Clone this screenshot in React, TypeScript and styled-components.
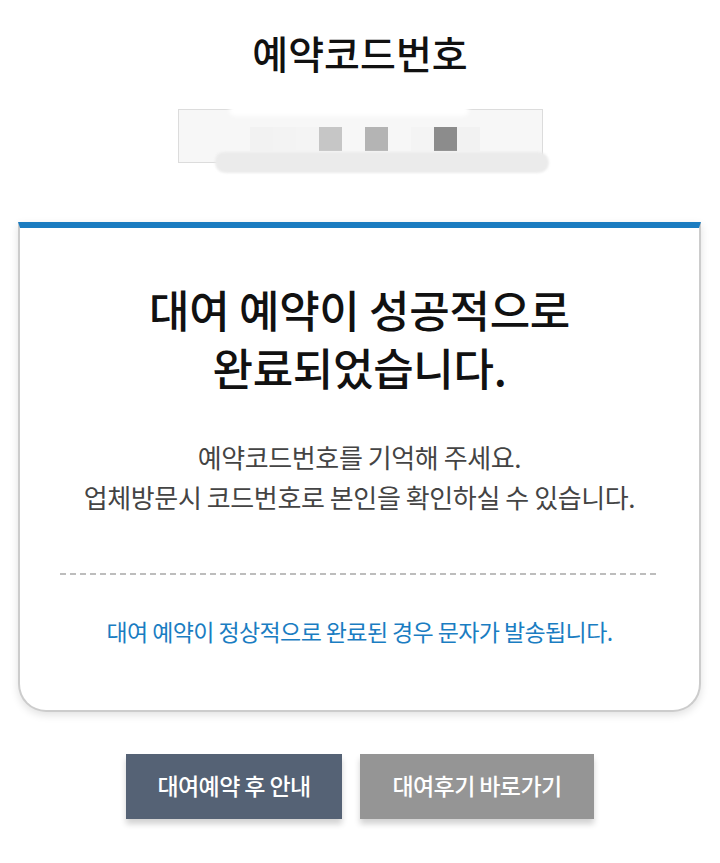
import React from "react";
import styled, { createGlobalStyle } from "styled-components";

const GlobalStyle = createGlobalStyle`
  html, body {
    margin: 0;
    padding: 0;
    background: #ffffff;
  }
  body {
    font-family: "Noto Sans CJK KR", "Noto Sans", sans-serif;
    color: #111;
  }
`;

const Page = styled.main`
  display: flex;
  flex-direction: column;
  align-items: center;
  padding-top: 24px;
  padding-bottom: 40px;
`;

const Title = styled.h1`
  margin: 0;
  font-size: 39px;
  line-height: 56px;
  font-weight: 500;
  color: #111;
  letter-spacing: 0;
`;

const CodeBox = styled.div`
  position: relative;
  margin-top: 29px;
  width: 365px;
  height: 54px;
  box-sizing: border-box;
  border: 1px solid #dcdcdc;
  background: #f7f7f7;
`;

const MosaicRow = styled.div`
  display: flex;
  padding: 17px 0 0 2px;
`;

const MosaicCell = styled.span<{ $c: string }>`
  display: block;
  width: 23px;
  height: 24px;
  background: ${(p) => p.$c};
`;

const BlurBand = styled.div`
  position: absolute;
  left: 36px;
  right: -7px;
  top: 42px;
  height: 21px;
  background: #ebebeb;
  border-radius: 10px 12px 12px 12px;
  filter: blur(1.2px);
`;

const BlurTop = styled.div`
  position: absolute;
  left: 50px;
  width: 240px;
  top: -6px;
  height: 12px;
  background: #ffffff;
  border-radius: 8px;
  filter: blur(2px);
`;

const Card = styled.section`
  align-self: stretch;
  margin: 59px 19px 0 18px;
  box-sizing: border-box;
  background: #ffffff;
  border: 2px solid #cccccc;
  border-top: 6px solid #1b7cc0;
  border-radius: 0 0 28px 28px;
  box-shadow: 0 3px 8px rgba(0, 0, 0, 0.12);
  padding: 52px 30px 64px;
  display: flex;
  flex-direction: column;
  align-items: center;
  text-align: center;
`;

const Heading = styled.h2`
  margin: 0;
  font-size: 44px;
  line-height: 58px;
  font-weight: 500;
  color: #111;
  letter-spacing: -0.3px;
`;

const SubText = styled.p`
  margin: 41px 0 0;
  font-size: 26px;
  line-height: 40px;
  font-weight: 400;
  color: #444;
  letter-spacing: -0.4px;
`;

const Divider = styled.hr`
  align-self: stretch;
  margin: 56px 10px 0;
  height: 2px;
  border: none;
  background: repeating-linear-gradient(
    to right,
    #bdbdbd 0,
    #bdbdbd 6px,
    transparent 6px,
    transparent 10px
  );
`;

const Notice = styled.p`
  margin: 41px 0 0;
  font-size: 23px;
  line-height: 30px;
  font-weight: 400;
  color: #1a7dc2;
  letter-spacing: -0.6px;
`;

const ButtonRow = styled.div`
  display: flex;
  gap: 18px;
  margin-top: 42px;
`;

const ActionButton = styled.button<{ $bg: string; $w: number }>`
  width: ${(p) => p.$w}px;
  height: 65px;
  border: none;
  border-radius: 0;
  background: ${(p) => p.$bg};
  color: #ffffff;
  font-family: "Noto Sans CJK KR", "Noto Sans", sans-serif;
  font-size: 23px;
  line-height: 30px;
  font-weight: 500;
  letter-spacing: -0.6px;
  box-shadow: 0 5px 6px rgba(0, 0, 0, 0.18);
  cursor: pointer;
  padding: 0 0 4px;
`;

const cells = [
  "#f7f7f7",
  "#f7f7f7",
  "#f7f7f7",
  "#f2f2f2",
  "#f3f3f3",
  "#f4f4f4",
  "#c6c6c6",
  "#f7f7f7",
  "#b4b4b4",
  "#f7f7f7",
  "#f4f4f4",
  "#8c8c8c",
  "#f2f2f2",
  "#f7f7f7",
  "#f7f7f7",
];

export default function App() {
  return (
    <>
      <GlobalStyle />
      <Page>
        <Title>예약코드번호</Title>
        <CodeBox>
          <MosaicRow>
            {cells.map((c, i) => (
              <MosaicCell key={i} $c={c} />
            ))}
          </MosaicRow>
          <BlurBand />
          <BlurTop />
        </CodeBox>
        <Card>
          <Heading>
            대여 예약이 성공적으로
            <br />
            완료되었습니다.
          </Heading>
          <SubText>
            예약코드번호를 기억해 주세요.
            <br />
            업체방문시 코드번호로 본인을 확인하실 수 있습니다.
          </SubText>
          <Divider />
          <Notice>대여 예약이 정상적으로 완료된 경우 문자가 발송됩니다.</Notice>
        </Card>
        <ButtonRow>
          <ActionButton $bg="#556275" $w={216}>
            대여예약 후 안내
          </ActionButton>
          <ActionButton $bg="#959595" $w={234}>
            대여후기 바로가기
          </ActionButton>
        </ButtonRow>
      </Page>
    </>
  );
}
